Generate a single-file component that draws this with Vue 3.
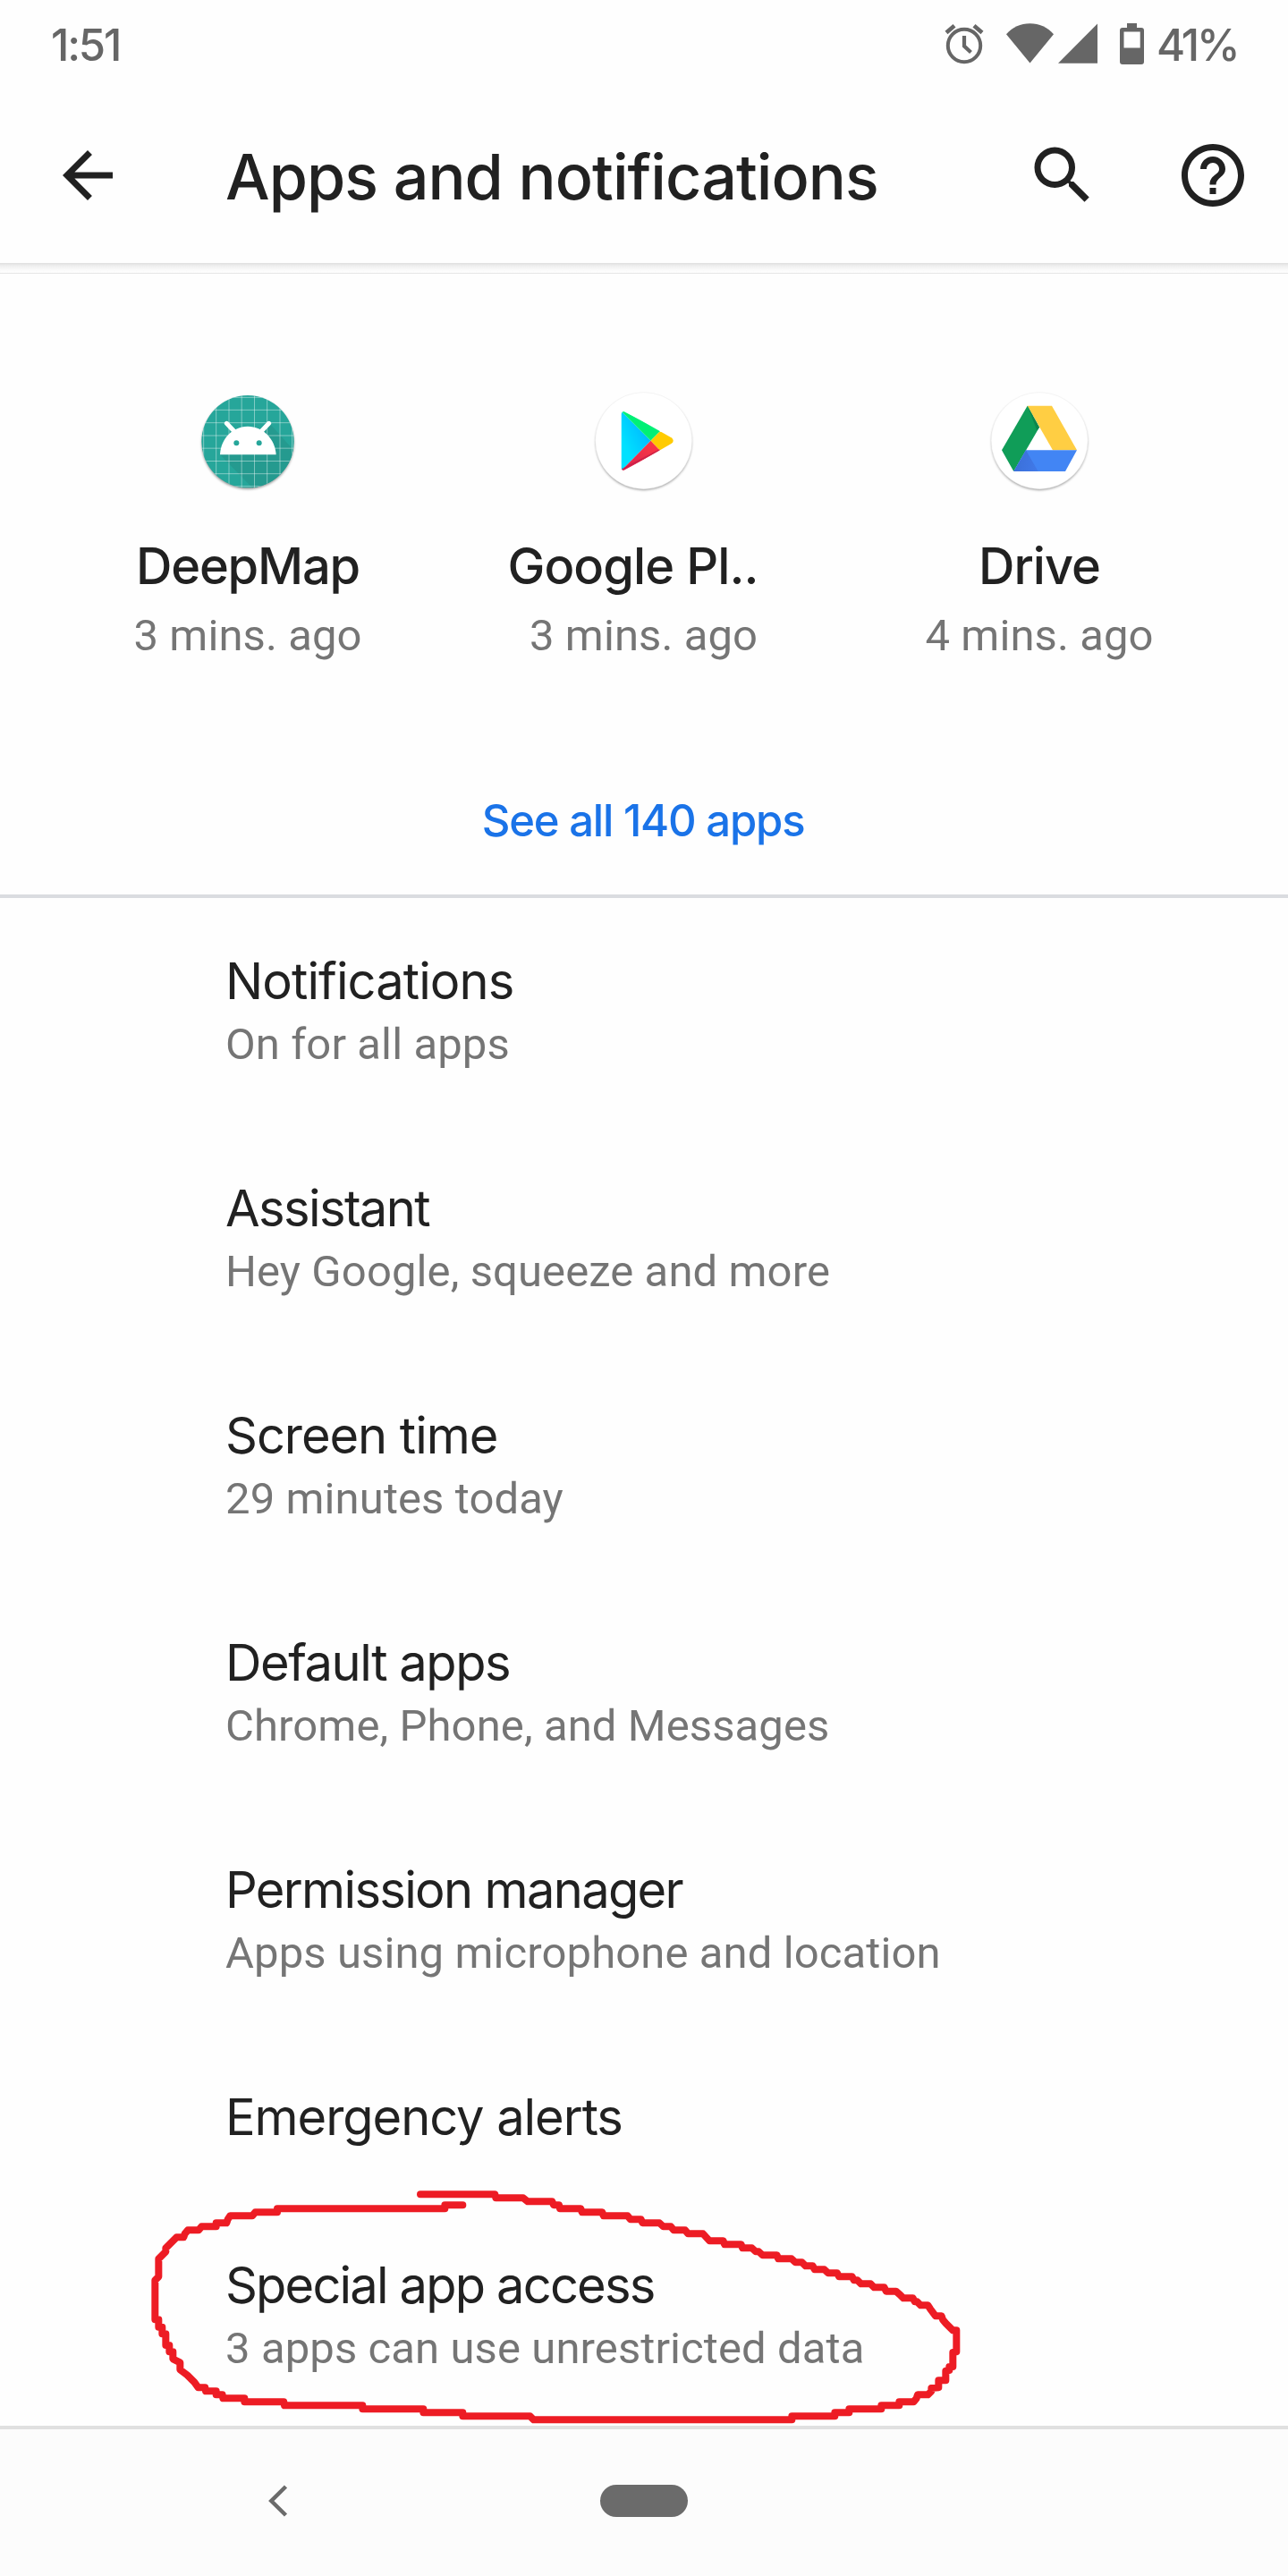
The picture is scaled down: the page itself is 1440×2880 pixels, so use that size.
<script setup>
const apps = [
  { id: 'deepmap', name: 'DeepMap', time: '3 mins. ago' },
  { id: 'play', name: 'Google Pl..', time: '3 mins. ago' },
  { id: 'drive', name: 'Drive', time: '4 mins. ago' },
]

// track: letter spacing in px that fits each title to its width
const items = [
  { title: 'Notifications', sub: 'On for all apps', track: -0.9 },
  { title: 'Assistant', sub: 'Hey Google, squeeze and more', track: -1.6 },
  { title: 'Screen time', sub: '29 minutes today', track: -1.05 },
  { title: 'Default apps', sub: 'Chrome, Phone, and Messages', track: -1.45 },
  { title: 'Permission manager', sub: 'Apps using microphone and location', track: -1.66 },
  { title: 'Emergency alerts', sub: '', track: -1.05 },
  { title: 'Special app access', sub: '3 apps can use unrestricted data', track: -1.82 },
]

const gridX = [323, 365, 408, 450.5, 493.5, 536, 579, 620]
const gridY = [73, 115, 158, 201, 243.5, 286.5, 329, 371]
</script>

<template>
  <div class="screen">
    <div class="status">
      <span class="clock">1:51</span>
      <svg class="alarm" width="44" height="46" viewBox="0 0 44 46" fill="none" stroke="#666">
        <circle cx="22" cy="25" r="18.2" stroke-width="4" />
        <path d="M22 14v11.5l7.5 7" stroke-width="4.2" />
        <path d="M2 10.5l9-7.8M42 10.5l-9-7.8" stroke-width="4.6" />
      </svg>
      <svg class="wifi" width="53" height="46" viewBox="0 0 53 46" fill="#666">
        <path d="M26.5 44.5L0 12.3C7 4.5 16 .3 26.5 .3S46 4.500 53 12.300z" />
      </svg>
      <svg class="signal" width="44" height="46" viewBox="0 0 44 46" fill="#666">
        <path d="M44 .5v44.200H0z" />
      </svg>
      <svg class="battery" width="27" height="46" viewBox="0 0 27 46" fill="#666" fill-rule="evenodd">
        <path d="M8 0h11v5h5a3 3 0 0 1 3 3v35a3 3 0 0 1-3 3H3a3 3 0 0 1-3-3V8a3 3 0 0 1 3-3h5zM4.500 9.500v18h18.200v-18z" />
      </svg>
      <span class="percent">41%</span>
    </div>

    <header class="bar">
      <svg class="back" width="84" height="84" viewBox="0 0 24 24" fill="#212121">
        <path d="M20 11H7.830l5.590-5.590L12 4l-8 8 8 8 1.410-1.410L7.830 13H20v-2z" />
      </svg>
      <h1>Apps and notifications</h1>
      <svg class="search" width="84" height="84" viewBox="0 0 24 24" fill="#212121">
        <path d="M15.500 14h-.79l-.28-.27A6.471 6.471 0 0 0 16 9.500 6.500 6.500 0 1 0 9.500 16c1.610 0 3.090-.59 4.230-1.570l.27.28v.79l5 4.990L20.490 19l-4.990-5zm-6 0C7.010 14 5 11.990 5 9.500S7.010 5 9.500 5 14 7.010 14 9.500 11.990 14 9.500 14z" />
      </svg>
      <svg class="help" width="84" height="84" viewBox="0 0 24 24" fill="#212121">
        <path d="M11 18h2v-2h-2v2zm1-16C6.480 2 2 6.480 2 12s4.480 10 10 10 10-4.480 10-10S17.520 2 12 2zm0 18c-4.410 0-8-3.590-8-8s3.590-8 8-8 8 3.590 8 8-3.590 8-8 8zm0-14c-2.210 0-4 1.790-4 4h2c0-1.100.9-2 2-2s2 .9 2 2c0 2-3 1.750-3 5h2c0-2.250 3-2.500 3-5 0-2.210-1.790-4-4-4z" />
      </svg>
    </header>
    <div class="edge"></div>

    <section class="recent">
      <div class="apps">
        <div v-for="a in apps" :key="a.id" class="app" :class="a.id">
          <svg v-if="a.id === 'deepmap'" class="icon" viewBox="276 24 390 390">
            <defs><clipPath id="disc"><circle cx="471" cy="221" r="155" /></clipPath></defs>
            <circle class="soft" cx="471" cy="226" r="154" fill="#000" opacity=".45" />
            <circle cx="471" cy="221" r="155" fill="#26a69a" />
            <g clip-path="url(#disc)">
              <path d="M378 265L500 390H660V290L540 155L525 190z" fill="#259a8f" />
              <g stroke="#fff" stroke-opacity=".42" stroke-width="3">
                <line v-for="x in gridX" :key="'x' + x" :x1="x" :x2="x" y1="60" y2="380" />
                <line v-for="y in gridY" :key="'y' + y" :y1="y" :y2="y" x1="310" x2="630" />
              </g>
            </g>
            <path d="M378 265C380 212 420 170 471 170s92 42 95 95z" fill="#fff" />
            <path d="M400 160l25 26M542 160l-25 26" stroke="#fff" stroke-width="15" stroke-linecap="round" />
            <circle cx="433" cy="226" r="9" fill="#26a69a" />
            <circle cx="509" cy="226" r="9" fill="#26a69a" />
          </svg>

          <svg v-else-if="a.id === 'play'" class="icon" viewBox="403.5 24 390 390">
            <defs>
              <linearGradient id="sky" x1="1" y1="0" x2="0" y2="1">
                <stop offset="0" stop-color="#00a8ff" /><stop offset=".7" stop-color="#00e1ff" />
              </linearGradient>
              <linearGradient id="rose" x1="1" y1="0" x2="0" y2="1">
                <stop offset="0" stop-color="#ff3a44" /><stop offset="1" stop-color="#d6204f" />
              </linearGradient>
              <clipPath id="tri"><path d="M522 129Q524 118 535 120L690 208Q704 218 690 228L536 317Q524 320 522 309z" /></clipPath>
            </defs>
            <circle class="soft" cx="597.500" cy="223" r="160" fill="#000" opacity=".45" />
            <circle cx="597.500" cy="218" r="162" fill="#fff" stroke="#ececec" stroke-width="1.500" />
            <g clip-path="url(#tri)">
              <path d="M515 112L621 218.500L515 326z" fill="url(#sky)" />
              <path d="M515 112L621 218.500L655 184z" fill="#00f076" />
              <path d="M650 189L621 218.500L651 250L710 250V180z" fill="#ffcb00" />
              <path d="M515 326L621 218.500L653 252z" fill="url(#rose)" />
              <path d="M522 316L651 249" stroke="#b71c48" stroke-width="5" opacity=".6" />
            </g>
          </svg>

          <svg v-else class="icon" viewBox="411 24 390 390">
            <defs>
              <linearGradient id="fold" x1="0" y1=".5" x2="1" y2=".7">
                <stop offset="0" stop-color="#3b6fd8" /><stop offset="1" stop-color="#4079e8" />
              </linearGradient>
            </defs>
            <circle class="soft" cx="606.500" cy="223" r="160" fill="#000" opacity=".45" />
            <circle cx="606.500" cy="218" r="162" fill="#fff" stroke="#ececec" stroke-width="1.500" />
            <path d="M566 101H648L732 250H651z" fill="#ffce43" />
            <path d="M566 101L606 173L520 321L480 250z" fill="#109d58" />
            <path d="M566 101L606 173L598 184z" fill="#0d864c" />
            <path d="M561 250H732L693 321H520z" fill="#4285f4" />
            <path d="M561 250L602 321H520z" fill="url(#fold)" />
          </svg>
          <div class="name">{{ a.name }}</div>
          <div class="time">{{ a.time }}</div>
        </div>
      </div>
      <a class="all">See all 140 apps</a>
    </section>

    <main class="list">
      <div v-for="i in items" :key="i.title" class="item" :class="{ single: !i.sub }">
        <div class="title" :style="{ letterSpacing: i.track + 'px' }">{{ i.title }}</div>
        <div v-if="i.sub" class="sub">{{ i.sub }}</div>
      </div>
    </main>

    <nav class="nav">
      <svg class="prev" width="22" height="36" viewBox="0 0 22 36" fill="none" stroke="#6b6b6b" stroke-width="4.500">
        <path d="M19.500 2L3.300 18L19.500 34" />
      </svg>
      <div class="pill"></div>
    </nav>

    <svg class="mark" width="1440" height="460" viewBox="0 2420 1440 460">
      <g transform="translate(150 2420) scale(.33333)" fill="none" stroke="#ed1c24" stroke-width="24" stroke-linecap="round" stroke-linejoin="round">
        <polyline points="960,100 1210,100 1213,112 1305,112 1320,124 1402,124 1407,136 1425,136 1428,148 1498,148 1502,160 1570,160 1574,172 1655,172 1665,184 1700,184 1705,196 1762,196 1775,208 1800,208 1810,220 1848,220 1858,232 1908,232 1930,256 1976,256 1980,268 2036,268 2040,280 2072,280 2085,292 2095,292 2108,304 2156,304 2160,316 2205,316 2218,328 2240,328 2252,340 2276,340 2282,352 2315,352 2328,364 2358,364 2364,376 2408,376 2414,388 2426,388 2438,400 2470,400 2482,412 2516,412 2522,425 2555,425 2568,436 2580,448 2612,448 2618,460 2626,460 2638,472 2662,472 2670,484 2688,508 2708,508 2712,520 2722,532 2734,544 2746,556 2758,556 2758,628 2746,630 2746,678 2734,678 2734,690 2722,692 2722,724 2698,724 2698,748 2674,750 2674,760 2662,772 2628,772 2624,784 2614,796 2566,796 2566,808 2506,808 2506,820 2398,820 2398,832 2350,832 2350,844 2206,844 2206,856 1340,856 1328,844 1102,844 1102,832 970,832 970,820 766,820 766,808 504,808 502,796 370,796 370,784 298,784 296,772 275,772 275,760 240,760 238,748 215,748 202,730 190,718 178,706 154,688 154,664 130,652 130,628 118,628 118,606 106,606 106,568 94,568 94,545 82,545 82,520 70,520 70,388 82,376 82,316 106,292 106,280 130,256 142,244 166,244 170,232 180,220 216,220 226,208 275,208 275,196 310,196 314,184 322,172 396,172 406,160 480,160 480,148 1042,148 1042,136 1102,136" />
      </g>
    </svg>
  </div>
</template>

<style>
html, body { margin: 0; background: #fefefe; }
</style>

<style scoped>
.screen {
  position: relative;
  width: 1440px;
  height: 2880px;
  overflow: hidden;
  display: flex;
  flex-direction: column;
  background: #fefefe;
  color: #212121;
  font-family: Inter, "Open Sans", sans-serif;
}
svg { display: block; flex: none; }

.status {
  height: 74px;
  padding: 26px 0 0 57px;
  display: flex;
  align-items: flex-start;
  color: #666;
  font-size: 49px;
  font-weight: 500;
  line-height: 50px;
  white-space: nowrap;
}
.clock { width: 999px; letter-spacing: -2.2px; }
.wifi { margin-left: 25px; }
.signal { margin-left: 5px; }
.battery { margin-left: 25px; }
.percent { margin-left: 14px; letter-spacing: -3.1px; }

.bar {
  position: relative;
  height: 194px;
  display: flex;
  align-items: center;
  padding-left: 56px;
  background: #fefefe;
}
.bar svg { margin-top: -2px; }
h1 {
  width: 893px;
  margin: 2px 0 0 112px;
  font-size: 70px;
  font-weight: 500;
  line-height: 84px;
  letter-spacing: -0.97px;
  white-space: nowrap;
}
.search { margin-left: 0.5px; }
.help { margin-left: 84px; }
.edge {
  height: 11px;
  border-bottom: 1px solid #e6e6e6;
  background: linear-gradient(#dfdfdf, #efefef 30%, #fafafa 70%, #fefefe);
}

.recent {
  height: 572px;
  padding-top: 122px;
  border-bottom: 4px solid #dadce0;
  display: flex;
  flex-direction: column;
  align-items: center;
}
.apps { display: flex; align-self: stretch; padding-left: 55.75px; }
.app { width: 442.5px; display: flex; flex-direction: column; align-items: center; white-space: nowrap; }
.icon { width: 130px; height: 130px; overflow: visible; }
.soft { filter: blur(4px); }
.name { margin-top: 39px; font-size: 56px; font-weight: 500; line-height: 72px; letter-spacing: -1.2px; }
.play .name { margin-right: 24px; letter-spacing: -0.92px; }
.drive .name { letter-spacing: -1px; }
.time { margin-top: 7px; font: 400 49px/70px Roboto, sans-serif; color: #757575; letter-spacing: 0.08px; }
.all { margin: 137px 2px 0 0; font-size: 49px; font-weight: 500; line-height: 70px; letter-spacing: -1.2px; color: #1a73e8; }

.item { height: 142px; padding: 57px 0 55px 252px; white-space: nowrap; }
.item.single { height: 72px; padding-bottom: 59px; }
.item:last-child { padding-bottom: 51px; }
.title { font-size: 56px; font-weight: 400; line-height: 72px; }
.sub { font: 400 49px/70px Roboto, sans-serif; color: #757575; letter-spacing: 0.1px; }

.nav {
  height: 164px;
  border-top: 4px solid #e0e0e0;
  background: #fcfcfc;
  display: flex;
  align-items: flex-start;
}
.prev { margin: 62px 0 0 300px; }
.pill { width: 98px; height: 36px; margin: 62px 0 0 349px; border-radius: 18px; background: #6b6b6b; }

.mark { position: absolute; left: 0; top: 2420px; pointer-events: none; }
</style>
